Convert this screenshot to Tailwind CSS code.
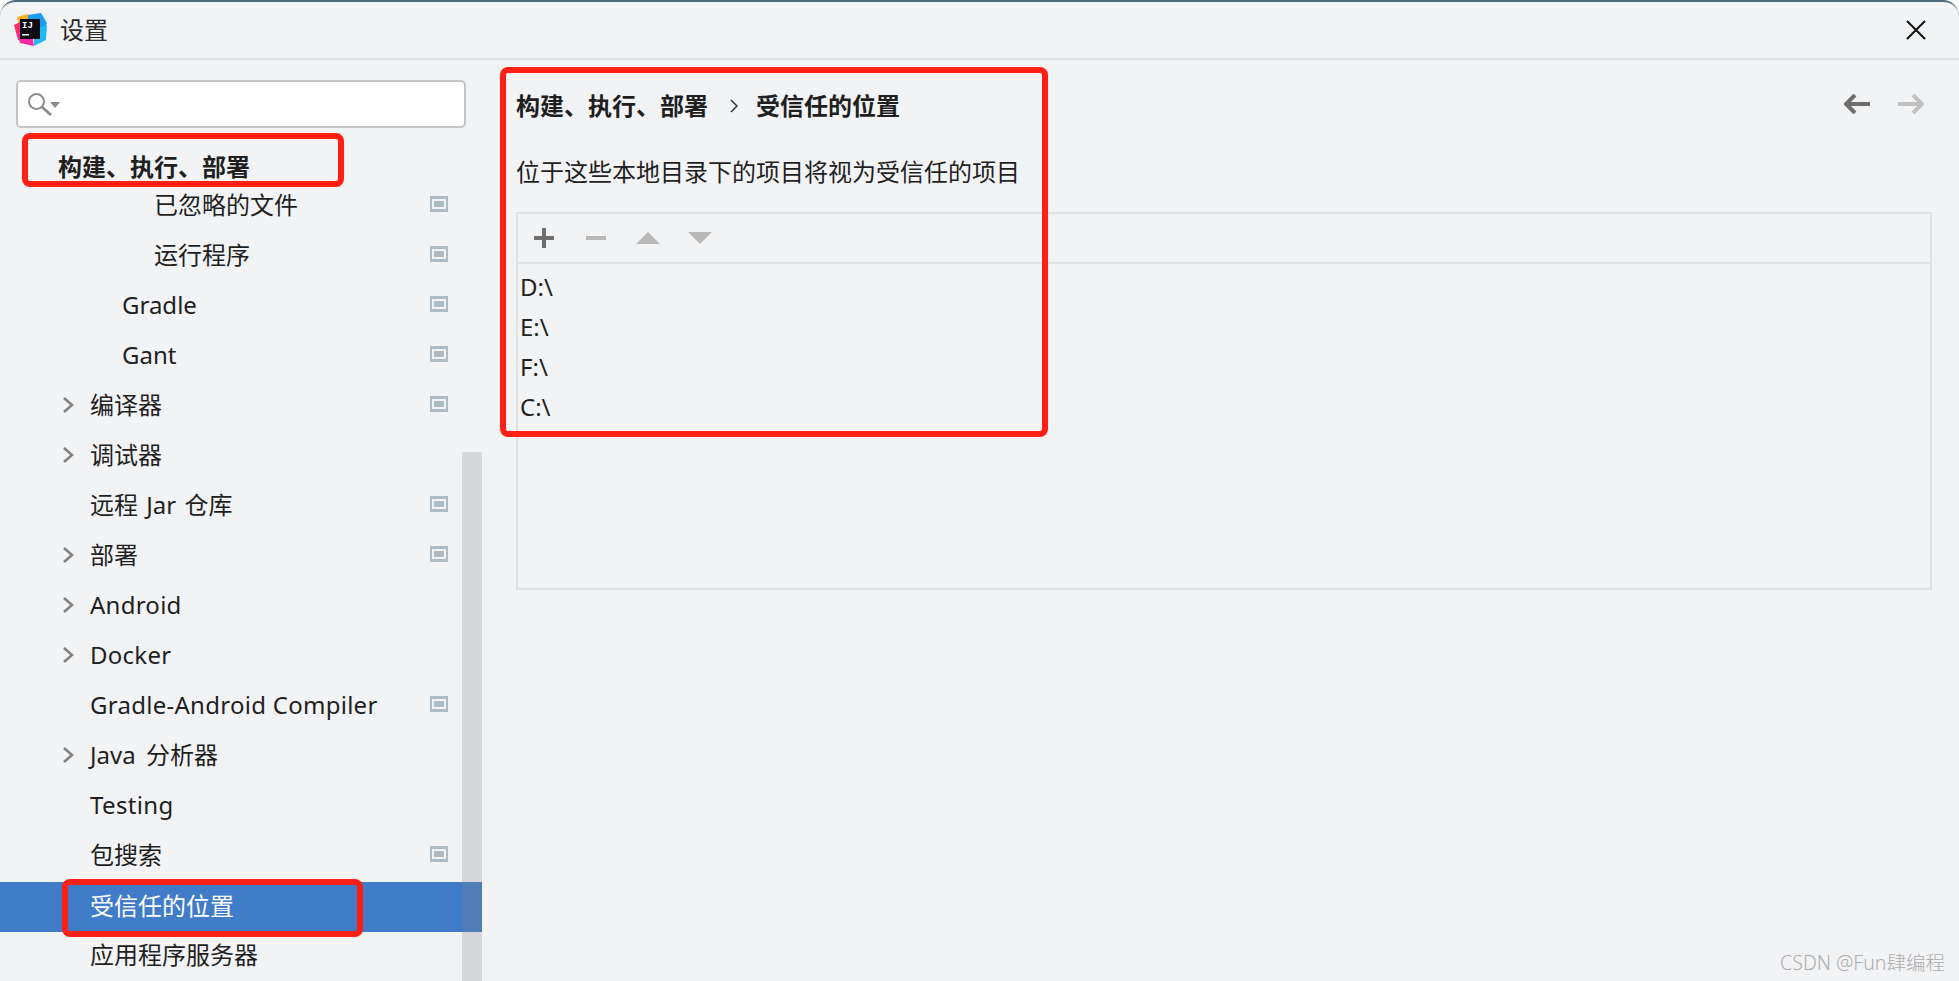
<!DOCTYPE html>
<html lang="zh-CN">
  <head>
    <meta charset="UTF-8" />
    <title>设置</title>
    <script src="https://cdn.jsdelivr.net/npm/@tailwindcss/browser@4"></script>
  </head>
  <body class="bg-white">
    <div class="relative w-[1959px] h-[981px] overflow-hidden bg-[#f2f3f5] rounded-t-[16px] border-t-2 border-[#4f6a78] text-[24px] text-[#1f1f1f] font-['Noto_Sans','Noto_Sans_CJK_SC',sans-serif]">
      <!-- Title bar -->
      <div class="flex items-center h-[56px] border-b-2 border-[#dfe1e5] box-content">
        <svg class="ml-[14px] w-[34px] h-[34px]" viewBox="0 0 34 34">
          <polygon points="3,4 14,1 18,12 6,16" fill="#ffb01f" />
          <polygon points="0,12 8,8 14,24 4,27" fill="#ff2d6f" />
          <polygon points="3,20 18,20 20,33 6,30" fill="#f02aa0" />
          <polygon points="14,2 27,0 33,10 28,20 14,14" fill="#1a9df0" />
          <polygon points="20,16 33,12 32,27 20,33" fill="#22b8f5" />
          <rect x="6" y="6" width="20" height="20" fill="#0c0a12" />
          <text x="8" y="15" fill="#ffffff" font-size="9" font-weight="700" font-family="Liberation Mono, monospace">IJ</text>
          <rect x="8" y="21" width="7" height="1.5" fill="#ffffff" />
        </svg>
        <span class="ml-[12px] text-[#2a2a2a]">设置</span>
        <svg class="ml-auto mr-[33px] w-[20px] h-[20px]" viewBox="0 0 20 20">
          <path d="M1 1 L19 19 M19 1 L1 19" stroke="#111111" stroke-width="2" fill="none" />
        </svg>
      </div>

      <div class="flex h-[921px]">
        <!-- Sidebar -->
        <div class="relative w-[482px] shrink-0 overflow-hidden">
          <div class="mt-[20px] ml-[16px] w-[450px] h-[48px] bg-white border-2 border-[#c4c4c4] rounded-[5px] flex items-center pl-[10px]">
            <svg class="w-[34px] h-[26px]" viewBox="0 0 34 26">
              <circle cx="8.5" cy="10.5" r="7.5" stroke="#8c8c8c" stroke-width="2" fill="none" />
              <path d="M14 16 L23 24" stroke="#8c8c8c" stroke-width="3" />
              <polygon points="22,11 32,11 27,17" fill="#8c8c8c" />
            </svg>
          </div>
          <div class="mt-[26px] h-[28px] leading-[26px] pl-[58px] font-bold">构建、执行、部署</div>

          <div class="flex items-center h-[50px] pb-[4px] pl-[154px] pr-[34px]"><span>已忽略的文件</span><svg class="ml-auto -translate-y-px w-[18px] h-[16px]" viewBox="0 0 18 16"><rect width="18" height="16" fill="#afbbc3" /><rect x="2" y="3" width="14" height="10" fill="#f2f3f5" /><rect x="4" y="5" width="10" height="6" fill="#afbbc3" /></svg></div>
          <div class="flex items-center h-[50px] pb-[4px] pl-[154px] pr-[34px]"><span>运行程序</span><svg class="ml-auto -translate-y-px w-[18px] h-[16px]" viewBox="0 0 18 16"><rect width="18" height="16" fill="#afbbc3" /><rect x="2" y="3" width="14" height="10" fill="#f2f3f5" /><rect x="4" y="5" width="10" height="6" fill="#afbbc3" /></svg></div>
          <div class="flex items-center h-[50px] pb-[4px] pl-[122px] pr-[34px]"><span>Gradle</span><svg class="ml-auto -translate-y-px w-[18px] h-[16px]" viewBox="0 0 18 16"><rect width="18" height="16" fill="#afbbc3" /><rect x="2" y="3" width="14" height="10" fill="#f2f3f5" /><rect x="4" y="5" width="10" height="6" fill="#afbbc3" /></svg></div>
          <div class="flex items-center h-[50px] pb-[4px] pl-[122px] pr-[34px]"><span>Gant</span><svg class="ml-auto -translate-y-px w-[18px] h-[16px]" viewBox="0 0 18 16"><rect width="18" height="16" fill="#afbbc3" /><rect x="2" y="3" width="14" height="10" fill="#f2f3f5" /><rect x="4" y="5" width="10" height="6" fill="#afbbc3" /></svg></div>
          <div class="flex items-center h-[50px] pb-[4px] pl-[63px] pr-[34px]"><svg class="w-[11px] h-[16px] mr-[16px]" viewBox="0 0 11 16"><path d="M1 1 L9 8 L1 15" stroke="#808080" stroke-width="2.5" fill="none" /></svg><span>编译器</span><svg class="ml-auto -translate-y-px w-[18px] h-[16px]" viewBox="0 0 18 16"><rect width="18" height="16" fill="#afbbc3" /><rect x="2" y="3" width="14" height="10" fill="#f2f3f5" /><rect x="4" y="5" width="10" height="6" fill="#afbbc3" /></svg></div>
          <div class="flex items-center h-[50px] pb-[4px] pl-[63px] pr-[34px]"><svg class="w-[11px] h-[16px] mr-[16px]" viewBox="0 0 11 16"><path d="M1 1 L9 8 L1 15" stroke="#808080" stroke-width="2.5" fill="none" /></svg><span>调试器</span></div>
          <div class="flex items-center h-[50px] pb-[4px] pl-[90px] pr-[34px]"><span class="[word-spacing:2px]">远程 Jar 仓库</span><svg class="ml-auto -translate-y-px w-[18px] h-[16px]" viewBox="0 0 18 16"><rect width="18" height="16" fill="#afbbc3" /><rect x="2" y="3" width="14" height="10" fill="#f2f3f5" /><rect x="4" y="5" width="10" height="6" fill="#afbbc3" /></svg></div>
          <div class="flex items-center h-[50px] pb-[4px] pl-[63px] pr-[34px]"><svg class="w-[11px] h-[16px] mr-[16px]" viewBox="0 0 11 16"><path d="M1 1 L9 8 L1 15" stroke="#808080" stroke-width="2.5" fill="none" /></svg><span>部署</span><svg class="ml-auto -translate-y-px w-[18px] h-[16px]" viewBox="0 0 18 16"><rect width="18" height="16" fill="#afbbc3" /><rect x="2" y="3" width="14" height="10" fill="#f2f3f5" /><rect x="4" y="5" width="10" height="6" fill="#afbbc3" /></svg></div>
          <div class="flex items-center h-[50px] pb-[4px] pl-[63px] pr-[34px]"><svg class="w-[11px] h-[16px] mr-[16px]" viewBox="0 0 11 16"><path d="M1 1 L9 8 L1 15" stroke="#808080" stroke-width="2.5" fill="none" /></svg><span class="tracking-[0.25px]">Android</span></div>
          <div class="flex items-center h-[50px] pb-[4px] pl-[63px] pr-[34px]"><svg class="w-[11px] h-[16px] mr-[16px]" viewBox="0 0 11 16"><path d="M1 1 L9 8 L1 15" stroke="#808080" stroke-width="2.5" fill="none" /></svg><span class="tracking-[0.25px]">Docker</span></div>
          <div class="flex items-center h-[50px] pb-[4px] pl-[90px] pr-[34px]"><span class="tracking-[0.27px]">Gradle-Android Compiler</span><svg class="ml-auto -translate-y-px w-[18px] h-[16px]" viewBox="0 0 18 16"><rect width="18" height="16" fill="#afbbc3" /><rect x="2" y="3" width="14" height="10" fill="#f2f3f5" /><rect x="4" y="5" width="10" height="6" fill="#afbbc3" /></svg></div>
          <div class="flex items-center h-[50px] pb-[4px] pl-[63px] pr-[34px]"><svg class="w-[11px] h-[16px] mr-[16px]" viewBox="0 0 11 16"><path d="M1 1 L9 8 L1 15" stroke="#808080" stroke-width="2.5" fill="none" /></svg><span class="[word-spacing:4px]">Java 分析器</span></div>
          <div class="flex items-center h-[50px] pb-[4px] pl-[90px] pr-[34px]"><span class="tracking-[0.35px]">Testing</span></div>
          <div class="flex items-center h-[50px] pb-[4px] pl-[90px] pr-[34px]"><span>包搜索</span><svg class="ml-auto -translate-y-px w-[18px] h-[16px]" viewBox="0 0 18 16"><rect width="18" height="16" fill="#afbbc3" /><rect x="2" y="3" width="14" height="10" fill="#f2f3f5" /><rect x="4" y="5" width="10" height="6" fill="#afbbc3" /></svg></div>
          <div class="flex items-center h-[50px] pb-[2px] pl-[90px] pr-[34px] bg-[#407cc8] text-white"><span>受信任的位置</span></div>
          <div class="flex items-center h-[50px] pb-[4px] pl-[90px] pr-[34px]"><span>应用程序服务器</span></div>

          <!-- Scrollbar -->
          <div class="absolute right-0 top-[392px] bottom-0 w-[20px] bg-[#808080]/25"></div>
        </div>

        <!-- Main panel -->
        <div class="flex-1 pl-[34px]">
          <div class="mt-[26px] h-[40px] flex items-center pr-[35px] font-bold">
            <span>构建、执行、部署</span>
            <svg class="ml-[22px] mr-[18px] w-[8px] h-[14px]" viewBox="0 0 8 14"><path d="M1 1 L7 7 L1 13" stroke="#333333" stroke-width="1.5" fill="none" /></svg>
            <span>受信任的位置</span>
            <svg class="ml-auto -translate-y-[2px] w-[26px] h-[20px]" viewBox="0 0 26 20"><path d="M26 10 L3 10 M11 1 L2 10 L11 19" stroke="#6e6e6e" stroke-width="4" fill="none" /></svg>
            <svg class="ml-[28px] -translate-y-[2px] w-[26px] h-[20px]" viewBox="0 0 26 20"><path d="M0 10 L23 10 M15 1 L24 10 L15 19" stroke="#c0c0c0" stroke-width="4" fill="none" /></svg>
          </div>
          <div class="mt-[26px] h-[40px] leading-[40px]">位于这些本地目录下的项目将视为受信任的项目</div>
          <div class="mt-[20px] w-[1416px] h-[378px] border-2 border-[#dfe1e5]">
            <div class="flex items-center h-[48px] border-b-2 border-[#dfe1e5] box-content pl-[16px]">
              <svg class="w-[20px] h-[20px]" viewBox="0 0 20 20"><path d="M10 0 V20 M0 10 H20" stroke="#6e6e6e" stroke-width="4" /></svg>
              <svg class="ml-[32px] w-[20px] h-[20px]" viewBox="0 0 20 20"><path d="M0 10 H20" stroke="#b9b9b9" stroke-width="4" /></svg>
              <svg class="ml-[30px] w-[24px] h-[14px]" viewBox="0 0 24 14"><polygon points="12,1 24,13 0,13" fill="#b9b9b9" /></svg>
              <svg class="ml-[28px] w-[24px] h-[14px]" viewBox="0 0 24 14"><polygon points="0,1 24,1 12,13" fill="#b9b9b9" /></svg>
            </div>
            <div class="pl-[2px] pt-[3px]">
              <div class="h-[40px] leading-[40px]">D:\</div>
              <div class="h-[40px] leading-[40px]">E:\</div>
              <div class="h-[40px] leading-[40px]">F:\</div>
              <div class="h-[40px] leading-[40px]">C:\</div>
            </div>
          </div>
        </div>
      </div>

      <!-- Red annotation boxes drawn over the screenshot -->
      <div class="absolute left-[22px] top-[131px] w-[322px] h-[54px] border-[6px] border-[#ff2015] rounded-[8px]"></div>
      <div class="absolute left-[500px] top-[65px] w-[548px] h-[370px] border-[6px] border-[#ff2015] rounded-[8px]"></div>
      <div class="absolute left-[62px] top-[877px] w-[301px] h-[58px] border-[6px] border-[#ff2015] rounded-[8px]"></div>

      <!-- Watermark -->
      <div class="absolute right-[14px] top-[949px] text-[19.5px] font-light leading-[24px] text-[#adadad]">CSDN @Fun肆编程</div>
    </div>
  </body>
</html>
